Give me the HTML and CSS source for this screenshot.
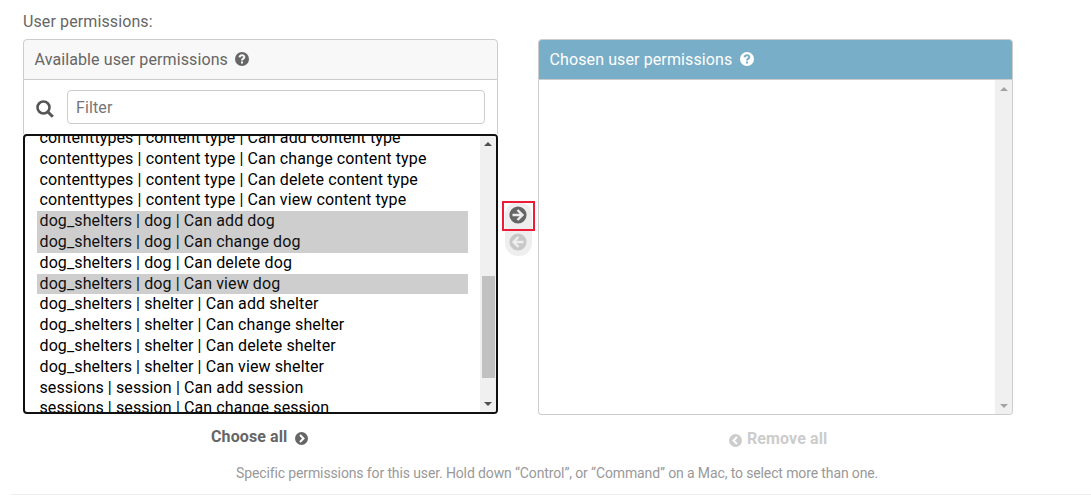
FILE: index.html
```html
<!DOCTYPE html>
<html lang="en">
<head>
<meta charset="utf-8">
<title>User permissions</title>
<link rel="stylesheet" href="styles.css">
</head>
<body>
<main class="form-row">
  <div class="field-label">User permissions:</div>
  <div class="selector">
    <section class="panel available">
      <h2 class="panel-title"><span class="title-available">Available user permissions</span>
        <svg class="help-icon" viewBox="0 0 14 14"><circle cx="7" cy="7" r="7" fill="#666"/><path d="M4.500 5.3C4.9 2.500 9.4 2.600 9.3 5.2 9.2 6.800 7 6.600 7 8.600" fill="none" stroke="#f8f8f8" stroke-width="2"/><path d="M6 9.500h2v2H6z" fill="#f8f8f8"/></svg>
      </h2>
      <div class="filter">
        <svg class="search-icon" viewBox="0 0 18 18"><circle cx="7.5" cy="7.5" r="6" fill="none" stroke="#555" stroke-width="2.6"/><path d="M12 12l4.8 4.8" stroke="#555" stroke-width="3"/></svg>
        <input class="filter-input" type="text" placeholder="Filter">
      </div>
      <div class="listbox">
        <ul class="options">
          <li class="option">contenttypes | content type | Can add content type</li>
          <li class="option">contenttypes | content type | Can change content type</li>
          <li class="option">contenttypes | content type | Can delete content type</li>
          <li class="option">contenttypes | content type | Can view content type</li>
          <li class="option selected">dog_shelters | dog | Can add dog</li>
          <li class="option selected">dog_shelters | dog | Can change dog</li>
          <li class="option">dog_shelters | dog | Can delete dog</li>
          <li class="option selected">dog_shelters | dog | Can view dog</li>
          <li class="option">dog_shelters | shelter | Can add shelter</li>
          <li class="option">dog_shelters | shelter | Can change shelter</li>
          <li class="option">dog_shelters | shelter | Can delete shelter</li>
          <li class="option">dog_shelters | shelter | Can view shelter</li>
          <li class="option">sessions | session | Can add session</li>
          <li class="option">sessions | session | Can change session</li>
        </ul>
        <div class="scrollbar active">
          <svg class="arrow" viewBox="0 0 8 4"><path d="M0 4L4 0l4 4z"/></svg>
          <div class="thumb"></div>
          <svg class="arrow" viewBox="0 0 8 4"><path d="M0 0h8L4 4z"/></svg>
        </div>
      </div>
    </section>
    <div class="chooser">
      <div class="chooser-pill">
        <svg class="move-icon" viewBox="0 0 18 18"><circle cx="9" cy="9" r="8.6" fill="#666"/><path d="M3.5 9h10M8.500 4l5 5-5 5" fill="none" stroke="#eee" stroke-width="2.4"/></svg>
        <svg class="move-icon" viewBox="0 0 18 18"><circle cx="9" cy="9" r="8.6" fill="#c8c8c8"/><path d="M14.5 9h-10M9.500 4L4.500 9l5 5" fill="none" stroke="#eee" stroke-width="2.4"/></svg>
      </div>
      <div class="highlight"></div>
    </div>
    <section class="panel chosen">
      <h2 class="panel-title"><span class="title-chosen">Chosen user permissions</span>
        <svg class="help-icon" viewBox="0 0 14 14"><circle cx="7" cy="7" r="7" fill="#fff"/><path d="M4.500 5.3C4.9 2.500 9.4 2.600 9.3 5.2 9.2 6.800 7 6.600 7 8.600" fill="none" stroke="#79aec8" stroke-width="2"/><path d="M6 9.500h2v2H6z" fill="#79aec8"/></svg>
      </h2>
      <div class="chosen-list">
        <div class="scrollbar disabled">
          <svg class="arrow" viewBox="0 0 8 4"><path d="M0 4L4 0l4 4z"/></svg>
          <svg class="arrow" viewBox="0 0 8 4"><path d="M0 0h8L4 4z"/></svg>
        </div>
      </div>
    </section>
  </div>
  <div class="actions">
    <a class="choose-all"><span class="choose-text">Choose all</span>
      <svg class="all-icon" viewBox="0 0 13 13"><circle cx="6.5" cy="6.5" r="6.5" fill="#666"/><path d="M5 3l3.500 3.500L5 10" fill="none" stroke="#fff" stroke-width="2"/></svg></a>
    <a class="remove-all">
      <svg class="all-icon" viewBox="0 0 13 13"><circle cx="6.5" cy="6.5" r="6.5" fill="#ccc"/><path d="M8 3L4.500 6.500 8 10" fill="none" stroke="#fff" stroke-width="2"/></svg>
      <span class="remove-text">Remove all</span></a>
  </div>
  <p class="help"><span class="help-text">Specific permissions for this user. Hold down “Control”, or “Command” on a Mac, to select more than one.</span></p>
</main>
</body>
</html>
```
FILE: styles.css
```css
* { box-sizing: border-box; }
body {
  margin: 0;
  background: #fff;
  color: #666;
  font: 16px/20px Roboto, sans-serif;
  letter-spacing: 0.11px;
  overflow: hidden;
}
.form-row {
  height: 495px;
  margin-left: 11px;
  padding: 12px 0 0 12px;
  border-bottom: 1px solid #eee;
}
.field-label { height: 27px; }
.selector { display: flex; height: 376px; }
.panel {
  display: flex;
  flex-direction: column;
  width: 475px;
}
.panel-title {
  display: flex;
  align-items: center;
  gap: 7px;
  height: 41px;
  flex: none;
  margin: 0;
  padding: 1px 11px 0 10.500px;
  border: 1px solid #ccc;
  border-radius: 4px 4px 0 0;
  background: #f8f8f8;
  font-size: 16px;
  font-weight: 400;
}
.help-icon { width: 14px; height: 14px; margin-bottom: 2px; }
.filter {
  display: flex;
  flex: none;
  align-items: flex-start;
  height: 54px;
  padding: 10px 12px 0;
  border: solid #ccc;
  border-width: 0 1px;
}
.search-icon { width: 18px; height: 18px; margin: 10px 13px 0 0; }
.filter-input {
  flex: 1;
  min-width: 0;
  height: 34px;
  padding: 0 8px;
  border: 1px solid #ccc;
  border-radius: 4px;
  font: 16px Roboto, sans-serif;
  letter-spacing: 0.11px;
}
.filter-input::placeholder { color: #757575; }
.listbox {
  display: flex;
  height: 280px;
  border: 2px solid #101010;
  border-radius: 4px;
  overflow: hidden;
}
.options {
  width: 443px;
  flex: 1;
  margin: -7.950px 12px 0;
  padding: 0;
  list-style: none;
  color: #000;
}
.option {
  height: 20.800px;
  padding-left: 2.500px;
  line-height: 20.800px;
  white-space: nowrap;
}
.selected { background: #cecece; color: #101010; }
.scrollbar {
  display: flex;
  flex-direction: column;
  align-items: center;
  justify-content: space-between;
  background: #f0f0f0;
}
.active { width: 16px; padding: 6px 0; fill: #505050; }
.disabled { width: 17px; padding: 7px 0 6px; fill: #a3a3a3; }
.arrow { width: 8px; height: 4px; }
.thumb { width: 13px; height: 102px; margin: 106px 0 0 1px; background: #c1c1c1; }
.chooser { position: relative; width: 40px; padding: 163px 0 0 7px; }
.chooser-pill {
  display: flex;
  flex-direction: column;
  align-items: flex-start;
  gap: 9px;
  width: 27px;
  height: 54px;
  padding: 4px 0 0 4px;
  border-radius: 13px;
  background: #eee;
}
.move-icon { width: 18px; height: 18px; }
.highlight {
  position: absolute;
  left: 4px;
  top: 162px;
  width: 33px;
  height: 30px;
  border: 2px solid #ed1c3a;
}
.chosen .panel-title { gap: 8px; background: #79aec8; color: #fff; }
.chosen-list {
  display: flex;
  flex: 1;
  justify-content: flex-end;
  border: solid #ccc;
  border-width: 0 1px 1px;
  border-radius: 0 0 4px 4px;
  overflow: hidden;
}
.actions {
  display: grid;
  grid-template-columns: 518px 1fr;
  height: 48px;
  padding: 12px 0 0 188px;
  font-weight: 700;
}
.choose-all, .remove-all { display: flex; align-items: flex-start; }
.choose-all { gap: 8px; }
.remove-all { gap: 5px; padding-top: 2px; color: #ccc; }
.all-icon { width: 13px; height: 13px; margin-top: 5px; }
.help { margin: 0 0 0 213px; color: #999; font-size: 14px; line-height: 20px; letter-spacing: -0.122px; }
```
